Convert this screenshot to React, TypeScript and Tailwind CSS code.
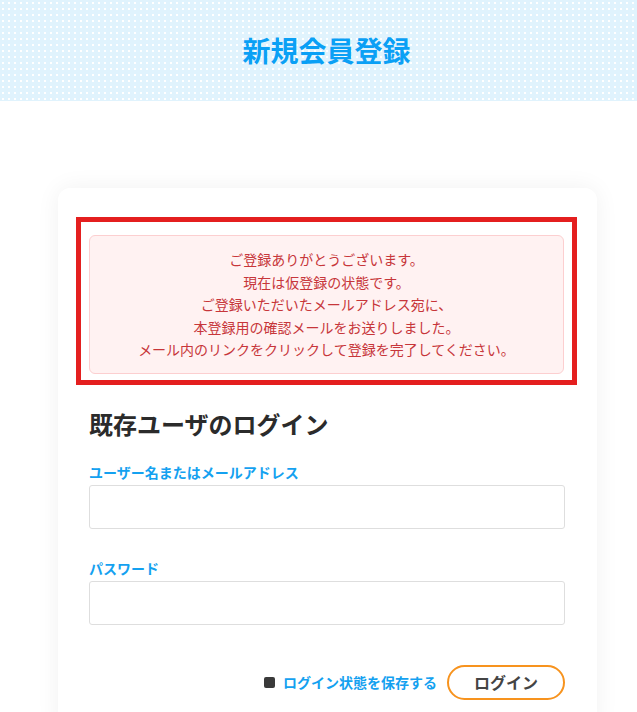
const font = { fontFamily: '"Noto Sans CJK JP", "Noto Sans", sans-serif' };

export default function App() {
  const lines = [
    'ご登録ありがとうございます。',
    '現在は仮登録の状態です。',
    'ご登録いただいたメールアドレス宛に、',
    '本登録用の確認メールをお送りしました。',
    'メール内のリンクをクリックして登録を完了してください。',
  ];

  return (
    <div className="min-h-[712px] bg-white pb-10" style={font}>
      <header className="h-[101px] flex items-center justify-center pl-4 pb-[2px] bg-[#e0f3fd] bg-[radial-gradient(circle,#ffffff_0.8px,transparent_1.2px)] bg-[length:6px_6px]">
        <h1 className="text-[28px] font-bold text-[#0aa0f5]">新規会員登録</h1>
      </header>

      <div className="ml-[58px] mr-[40px] mt-[87px] rounded-xl bg-white shadow-[0_0_24px_rgba(0,0,0,0.06)] pl-[31px] pr-[32px] pt-[29px] pb-8">
        <div className="-ml-[13px] -mr-[12px] border-[5px] border-[#e41f1f] pt-[13px] pb-[6px] px-[8px]">
          <div className="rounded-md border border-[#fccfd0] bg-[#fff2f2] py-3 text-center text-[14px] leading-[22.5px] text-[#c7363a]">
            {lines.map(l => (
              <p key={l}>{l}</p>
            ))}
          </div>
        </div>

        <h2 className="mt-[21px] text-[24px] leading-[36px] font-bold text-[#2b2b2b]">既存ユーザのログイン</h2>

        <label className="block mt-5 text-[14px] leading-5 font-bold text-[#14a1f0]">ユーザー名またはメールアドレス</label>
        <input type="text" className="mt-[3px] block w-full h-[44px] rounded-[3px] border border-[#dedede] bg-white outline-none px-3" />

        <label className="block mt-[29px] text-[14px] leading-5 font-bold text-[#14a1f0]">パスワード</label>
        <input type="password" className="mt-[3px] block w-full h-[44px] rounded-[3px] border border-[#dedede] bg-white outline-none px-3" />

        <div className="mt-10 flex items-center justify-end">
          <label className="flex items-center gap-2 text-[14px] font-bold text-[#14a1f0]">
            <span className="inline-block w-[11px] h-[11px] rounded-[2px] bg-[#3a3a3a]" />
            ログイン状態を保存する
          </label>
          <button className="ml-[10px] w-[118px] h-[35px] rounded-full border-2 border-[#f7931e] bg-white text-[16px] font-bold text-[#444]">
            ログイン
          </button>
        </div>
      </div>
    </div>
  );
}
